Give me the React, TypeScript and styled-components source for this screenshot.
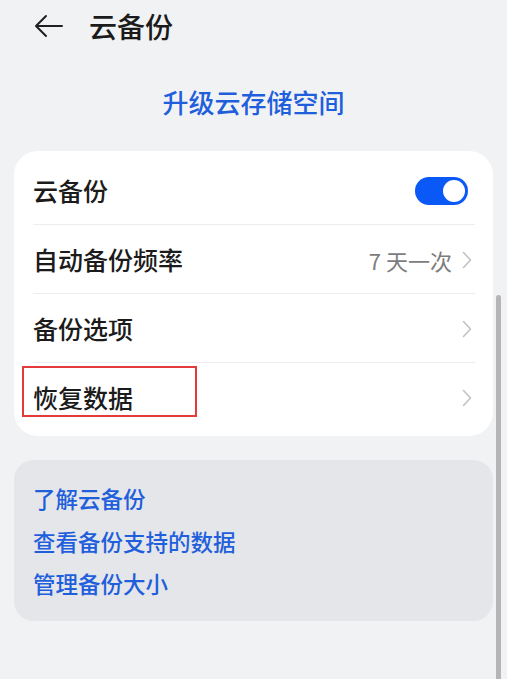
import React from "react";
import styled, { createGlobalStyle } from "styled-components";

const Global = createGlobalStyle`
  html, body { margin: 0; padding: 0; background: #f1f2f4; }
  body {
    font-family: "Noto Sans CJK SC", "Noto Sans", sans-serif;
    -webkit-font-smoothing: antialiased;
  }
`;

const Page = styled.div`
  position: relative;
  width: 507px;
  height: 679px;
  overflow: hidden;
  background: #f1f2f4;
`;

const Header = styled.header`
  height: 52px;
  display: flex;
  align-items: center;
  padding: 0 34px;
  gap: 25px;
`;

const Title = styled.h1`
  margin: 0;
  font-size: 28px;
  font-weight: 500;
  color: #1b1b1b;
  line-height: 1;
`;

const Upgrade = styled.div`
  margin-top: 29px;
  height: 40px;
  display: flex;
  align-items: center;
  justify-content: center;
  font-size: 26px;
  font-weight: 500;
  color: #1f5fdc;
`;

const Card = styled.section`
  margin: 30px 14px 0;
  background: #ffffff;
  border-radius: 24px;
  padding: 5px 0 4px;
`;

const Row = styled.div<{ $divider?: boolean }>`
  position: relative;
  height: 69px;
  display: flex;
  align-items: center;
  justify-content: space-between;
  padding: 0 21px 0 19px;
  &::after {
    content: "";
    display: ${(p) => (p.$divider ? "block" : "none")};
    position: absolute;
    left: 19px;
    right: 18px;
    bottom: 0;
    height: 1px;
    background: #ededef;
  }
`;

const Label = styled.span<{ $marked?: boolean }>`
  position: relative;
  font-size: 25px;
  font-weight: 500;
  color: #1b1b1b;
  line-height: 1;
  ${(p) =>
    p.$marked
      ? `&::before {
    content: "";
    position: absolute;
    left: -11px;
    top: -19px;
    width: 171px;
    height: 47px;
    border: 2px solid #e53a3a;
  }`
      : ""}
`;

const Trailing = styled.div`
  display: flex;
  align-items: center;
  gap: 10px;
`;

const Value = styled.span`
  font-size: 22px;
  color: #7d7d7d;
  line-height: 1;
`;

const Toggle = styled.div<{ $on?: boolean }>`
  width: 53px;
  height: 28px;
  margin-right: 4px;
  border-radius: 14px;
  background: ${(p) => (p.$on ? "#0a59f7" : "#cccccc")};
  display: flex;
  align-items: center;
  justify-content: ${(p) => (p.$on ? "flex-end" : "flex-start")};
  padding: 0 3px;
  box-sizing: border-box;
  &::after {
    content: "";
    width: 22px;
    height: 22px;
    border-radius: 50%;
    background: #ffffff;
  }
`;

const InfoCard = styled.section`
  margin: 24px 14px 0;
  background: #e5e6e9;
  border-radius: 20px;
  padding: 17px 19px 16px;
  display: flex;
  flex-direction: column;
`;

const InfoLink = styled.a`
  height: 42.5px;
  display: flex;
  align-items: center;
  font-size: 22.5px;
  font-weight: 500;
  color: #1f5fdc;
  text-decoration: none;
`;

const Scrollbar = styled.div`
  position: absolute;
  right: 6px;
  top: 295px;
  bottom: -10px;
  width: 5px;
  border-radius: 3px;
  background: #b5b5b7;
`;

const BackIcon = () => (
  <svg width="30" height="26" viewBox="0 0 30 26" fill="none">
    <path
      d="M28 13H2M12 3L2 13L12 23"
      stroke="#202020"
      strokeWidth="2"
      strokeLinecap="round"
      strokeLinejoin="round"
    />
  </svg>
);

const Chevron = () => (
  <svg width="10" height="18" viewBox="0 0 10 18" fill="none">
    <path
      d="M1.5 1.5L8.5 9L1.5 16.5"
      stroke="#c2c2c4"
      strokeWidth="1.6"
      strokeLinecap="round"
      strokeLinejoin="round"
    />
  </svg>
);

export default function App() {
  return (
    <Page>
      <Global />
      <Header>
        <BackIcon />
        <Title>云备份</Title>
      </Header>
      <Upgrade>升级云存储空间</Upgrade>
      <Card>
        <Row $divider>
          <Label>云备份</Label>
          <Toggle $on />
        </Row>
        <Row $divider>
          <Label>自动备份频率</Label>
          <Trailing>
            <Value>7 天一次</Value>
            <Chevron />
          </Trailing>
        </Row>
        <Row $divider>
          <Label>备份选项</Label>
          <Chevron />
        </Row>
        <Row>
          <Label $marked>恢复数据</Label>
          <Chevron />
        </Row>
      </Card>
      <InfoCard>
        <InfoLink>了解云备份</InfoLink>
        <InfoLink>查看备份支持的数据</InfoLink>
        <InfoLink>管理备份大小</InfoLink>
      </InfoCard>
      <Scrollbar />
    </Page>
  );
}
